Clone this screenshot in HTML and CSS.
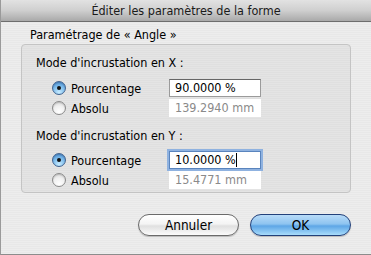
FILE: index.html
```html
<!DOCTYPE html>
<html lang="fr">
<head>
    <meta charset="UTF-8">
    <meta name="viewport" content="width=device-width, initial-scale=1.0">
    <title>Éditer les paramètres de la forme</title>
    <link rel="stylesheet" href="styles.css">
</head>
<body>
    <div class="window">
        <div class="titlebar">Éditer les paramètres de la forme</div>
        <div class="content">
            <div class="group-title">Paramétrage de « Angle »</div>
            <div class="group">
                <div class="section-title">Mode d'incrustation en X :</div>
                <div class="row">
                    <span class="radio checked"></span>
                    <span class="radio-label">Pourcentage</span>
                    <div class="field">90.0000 %</div>
                </div>
                <div class="row">
                    <span class="radio"></span>
                    <span class="radio-label">Absolu</span>
                    <div class="field disabled">139.2940 mm</div>
                </div>

                <div class="section-title second">Mode d'incrustation en Y :</div>
                <div class="row">
                    <span class="radio checked"></span>
                    <span class="radio-label">Pourcentage</span>
                    <div class="field focused">10.0000 %<span class="caret"></span></div>
                </div>
                <div class="row">
                    <span class="radio"></span>
                    <span class="radio-label">Absolu</span>
                    <div class="field disabled">15.4771 mm</div>
                </div>
            </div>
            <div class="buttons">
                <button class="btn">Annuler</button>
                <button class="btn default">OK</button>
            </div>
        </div>
    </div>
</body>
</html>
```

FILE: styles.css
```css
body {
    margin: 0;
    padding: 0;
    font-family: "DejaVu Sans Condensed", "DejaVu Sans", sans-serif;
    font-size: 12.5px;
    color: #000;
}
.window {
    width: 370px;
    height: 254px;
    border-left: 1px solid #9a9a9a;
    border-right: 1px solid #9a9a9a;
    border-bottom: 1px solid #8c8c8c;
    background-color: #ececec;
    background-image: repeating-linear-gradient(0deg, #ededed 0px, #ededed 1px, #e8e8e8 1px, #e8e8e8 2px);
}
.titlebar {
    height: 21px;
    line-height: 21px;
    text-align: center;
    font-size: 12.5px;
    color: #1a1a1a;
    background: linear-gradient(#e2e2e2, #cfcfcf 50%, #a9a9a9);
    border-bottom: 1px solid #6e6e6e;
}
.content {
    padding: 0 0 0 20px;
}
.group-title {
    padding: 5px 0 0 9px;
    height: 17px;
    line-height: 15px;
}
.group {
    width: 328px;
    height: 147px;
    border: 1px solid #c4c4c4;
    border-radius: 4px;
    background-color: #e2e2e2;
    background-image: repeating-linear-gradient(0deg, #e4e4e4 0px, #e4e4e4 1px, #dfdfdf 1px, #dfdfdf 2px);
}
.section-title {
    margin: 10px 0 7px 14px;
    line-height: 16px;
}
.section-title.second {
    margin-top: 10px;
    margin-bottom: 6px;
}
.row {
    display: flex;
    align-items: center;
    height: 20px;
    padding-left: 30px;
}
.radio {
    width: 12px;
    height: 12px;
    border-radius: 50%;
    border: 1px solid #8a8a8a;
    background: radial-gradient(circle at 50% 80%, #ffffff, #f0f0f0 50%, #cfcfcf);
    box-shadow: inset 0 1px 1px rgba(0, 0, 0, 0.15);
    display: flex;
    align-items: center;
    justify-content: center;
}
.radio.checked {
    border-color: #40628f;
    background: radial-gradient(circle at 50% 85%, #c8ecff, #78b8ea 55%, #3e7fc6);
}
.radio.checked::after {
    content: "";
    width: 4px;
    height: 4px;
    border-radius: 50%;
    background: #111;
}
.radio-label {
    margin-left: 5px;
    width: 98px;
}
.field {
    width: 85px;
    height: 16px;
    line-height: 16px;
    padding-left: 5px;
    background: #fff;
    border: 1px solid #9b9b9b;
    border-top-color: #666;
    font-size: 12.5px;
}
.field.disabled {
    border-color: transparent;
    color: #8a8a8a;
}
.field.focused {
    border-color: #5a84bd;
    box-shadow: 0 0 0 2px #8fb2e0;
}
.caret {
    display: inline-block;
    width: 1px;
    height: 14px;
    background: #000;
    vertical-align: -3px;
}
.buttons {
    display: flex;
    justify-content: flex-end;
    gap: 11px;
    width: 330px;
    margin-top: 21px;
}
.btn {
    width: 101px;
    height: 22px;
    border-radius: 11px;
    border: 1px solid #6a6a6a;
    background: linear-gradient(#ffffff, #f4f4f4 45%, #e0e0e0 55%, #fbfbfb);
    font-family: "DejaVu Sans Condensed", "DejaVu Sans", sans-serif;
    font-size: 13.5px;
    color: #000;
    padding: 0;
    box-shadow: 0 1px 1px rgba(0, 0, 0, 0.2);
}
.btn.default {
    border-color: #22407a;
    background: linear-gradient(#b8dbf8, #8ec4f0 45%, #5ea6e6 55%, #a8dcfb);
}
```
